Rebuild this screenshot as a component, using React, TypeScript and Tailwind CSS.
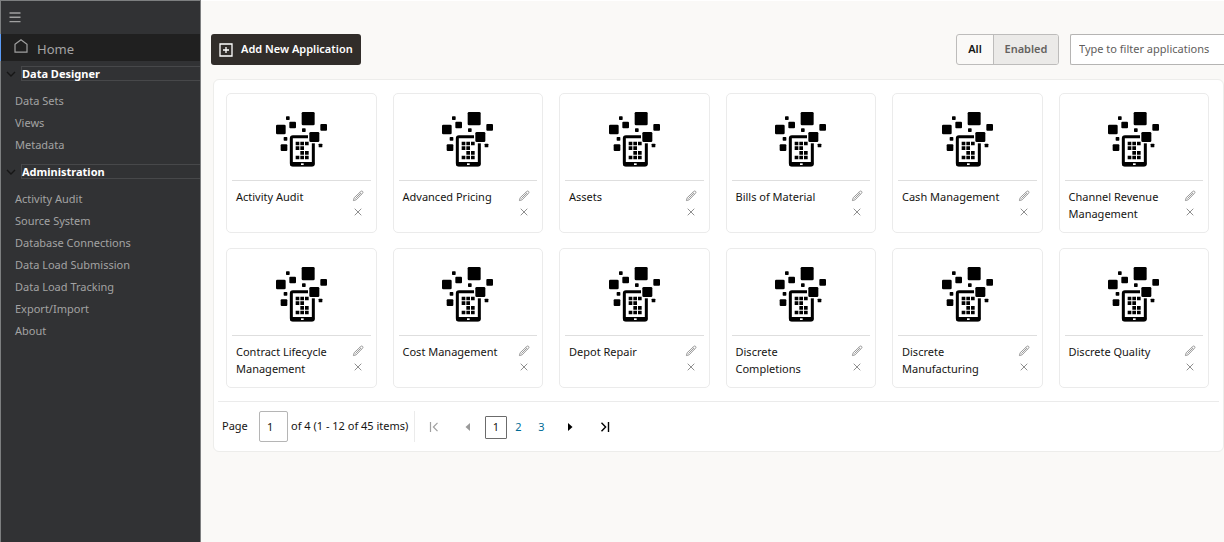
import React, { useState } from "react";

const designerLinks = ["Data Sets", "Views", "Metadata"];

const adminLinks = [
  "Activity Audit",
  "Source System",
  "Database Connections",
  "Data Load Submission",
  "Data Load Tracking",
  "Export/Import",
  "About",
];

const applications = [
  "Activity Audit",
  "Advanced Pricing",
  "Assets",
  "Bills of Material",
  "Cash Management",
  "Channel Revenue Management",
  "Contract Lifecycle Management",
  "Cost Management",
  "Depot Repair",
  "Discrete Completions",
  "Discrete Manufacturing",
  "Discrete Quality",
];

function AppIcon() {
  return (
    <svg viewBox="168 81 153 165" className="h-[55px] w-[51px]" aria-hidden="true">
      <rect x="214" y="155" width="66" height="85" rx="5" fill="#fff" stroke="#000" strokeWidth="9" />
      <rect x="211" y="231" width="72" height="13" rx="4" />
      <rect x="243" y="235" width="8" height="5" fill="#fff" />
      <rect x="264" y="136" width="38" height="39" fill="#fff" />
      <rect x="268" y="141" width="30" height="30" rx="4" />
      <rect x="245" y="81" width="39" height="40" rx="4" />
      <rect x="168" y="119" width="29" height="29" rx="4" />
      <rect x="208" y="110" width="20" height="20" rx="3" />
      <rect x="198" y="94" width="11" height="11" rx="2" />
      <rect x="246" y="130" width="11" height="11" rx="2" />
      <rect x="301" y="117" width="20" height="20" rx="3" />
      <rect x="191" y="156" width="11" height="11" rx="2" />
      <rect x="182" y="178" width="20" height="20" rx="3" />
      <rect x="296" y="176" width="11" height="11" rx="2" />
      <path d="M227 170h11v11h-11zM241 170h11v11h-11zM255 170h11v11h-11zM227 184h11v11h-11zM241 184h11v11h-11zM241 198h11v11h-11zM255 198h11v11h-11zM227 212h11v11h-11zM241 212h11v11h-11zM255 212h11v11h-11z" />
    </svg>
  );
}

function NavSection({ title, links }: { title: string; links: string[] }) {
  return (
    <section className="mt-[5px] mb-2">
      <h2 className="flex items-center">
        <svg viewBox="0 0 10 6" className="mx-[5px] h-[6px] w-[10px]" fill="none" stroke="#161616" strokeWidth="1.4" aria-hidden="true">
          <path d="M1 1l4 4 4-4" />
        </svg>
        <button type="button" className="h-[15px] flex-1 border border-r-0 border-[#47484a] text-left text-[11px] leading-[13px] font-bold text-white">
          {title}
        </button>
      </h2>
      <ul className="mt-[9px]">
        {links.map((link) => (
          <li key={link}>
            <a href="#" className="block pl-[14px] text-[11px] leading-[22px] text-[#a3a3a3]">
              {link}
            </a>
          </li>
        ))}
      </ul>
    </section>
  );
}

function Sidebar() {
  return (
    <nav className="w-[201px] shrink-0 border border-b-0 border-[#7d7f80] bg-[#313234]">
      <button type="button" aria-label="Toggle navigation" className="flex h-[33px] items-center pl-2">
        <svg viewBox="0 0 12 12" className="h-3 w-3" stroke="#a0a0a0" strokeWidth="1.4" aria-hidden="true">
          <path d="M0.5 1h11M0.5 5.3h11M0.5 9.6h11" />
        </svg>
      </button>
      <a href="#" className="-ml-px flex h-[27px] items-center gap-2 border-l border-[#5b9bf5] bg-[#202020] pl-3 text-[13px] text-[#a3a3a3]">
        <svg viewBox="0 0 16 16" className="mb-1 h-4 w-4" fill="none" stroke="#a0a0a0" strokeWidth="1.2" aria-hidden="true">
          <path d="M2 6.3L8 1.7l6 4.6v7.9H2z" />
        </svg>
        <span className="pt-1">Home</span>
      </a>
      <NavSection title="Data Designer" links={designerLinks} />
      <NavSection title="Administration" links={adminLinks} />
    </nav>
  );
}

function AppCard({ name }: { name: string }) {
  return (
    <li className="flex min-h-[140px] flex-col rounded-[5px] border border-[#ebebeb] px-[5px]">
      <div className="flex h-[87px] justify-center border-b border-[#dedede] pt-[18px]">
        <AppIcon />
      </div>
      <div className="flex justify-between pt-[7px] pr-[7px] pl-1">
        <h3 className="w-[104px] text-[11px] leading-[17px] text-[#161513]">{name}</h3>
        <div className="flex flex-col items-center gap-[6px] pt-[2px] text-[#8f8f8f]">
          <button type="button" aria-label={`Edit ${name}`}>
            <svg viewBox="0 0 12 12" className="h-3 w-3" fill="none" stroke="currentColor" strokeWidth="0.9" strokeLinejoin="round" aria-hidden="true">
              <path d="M1.4 10.6l0.8-2.9L8.9 1.4a1.2 1.2 0 0 1 1.7 1.7L4.2 9.8zM7.7 2.5l1.8 1.8M3.4 8.6l5-5" />
            </svg>
          </button>
          <button type="button" aria-label={`Remove ${name}`}>
            <svg viewBox="0 0 8 8" className="h-2 w-2" fill="none" stroke="currentColor" strokeWidth="1" aria-hidden="true">
              <path d="M0.7 0.7l6.6 6.6M7.3 0.7L0.7 7.3" />
            </svg>
          </button>
        </div>
      </div>
    </li>
  );
}

function Pager() {
  const [page, setPage] = useState("1");
  return (
    <div className="mx-1 flex h-[50px] items-center border-t border-[#ebebeb] pl-1 text-[11px] text-[#161513]">
      <label htmlFor="page" className="w-[37px]">Page</label>
      <input
        id="page"
        value={page}
        onChange={(e) => setPage(e.target.value)}
        className="h-[31px] w-[29px] rounded-[2px] border border-[#b5b5b5] bg-white pl-[7px] outline-none"
      />
      <span className="ml-[3px] w-[123px] whitespace-nowrap">of 4 (1 - 12 of 45 items)</span>
      <div className="h-[31px] border-l border-[#ebebeb]" />
      <div className="flex items-center pt-px">
        <button type="button" disabled aria-label="First page" className="flex w-[37px] justify-center">
          <svg viewBox="0 0 10 10" className="h-[10px] w-[10px]" fill="none" stroke="#a0a0a0" strokeWidth="1.2" aria-hidden="true">
            <path d="M1.5 0v10M8.5 0.8L4.4 5l4.1 4.2" />
          </svg>
        </button>
        <button type="button" disabled aria-label="Previous page" className="flex w-[33px] pl-[13px]">
          <svg viewBox="0 0 5 8" className="h-2 w-[5px]" fill="#9a9a9a" aria-hidden="true">
            <path d="M5 0v8L0.5 4z" />
          </svg>
        </button>
        <button type="button" aria-current="page" className="h-[23px] w-[22px] rounded-[1px] border border-[#6b6b6b]">1</button>
        <button type="button" className="w-[23px] text-[#006b96]">2</button>
        <button type="button" className="w-[23px] text-[#006b96]">3</button>
        <button type="button" aria-label="Next page" className="flex w-[35px] justify-center">
          <svg viewBox="0 0 5 8" className="h-2 w-[5px]" aria-hidden="true">
            <path d="M0 0v8l4.5-4z" />
          </svg>
        </button>
        <button type="button" aria-label="Last page" className="flex w-[34px] justify-center">
          <svg viewBox="0 0 10 10" className="h-[10px] w-[10px]" fill="none" stroke="#000" strokeWidth="1.4" aria-hidden="true">
            <path d="M8.5 0v10M1.5 0.8L5.6 5 1.5 9.2" />
          </svg>
        </button>
      </div>
    </div>
  );
}

export default function App() {
  const [enabledOnly, setEnabledOnly] = useState(false);
  const [filter, setFilter] = useState("");
  return (
    <div className="flex min-h-screen bg-[#faf9f7] font-['Noto_Sans',sans-serif]">
      <Sidebar />
      <main className="min-w-0 flex-1 border-t border-white pt-[33px]">
        <header className="flex h-[31px] items-stretch pl-[10px]">
          <button type="button" className="flex items-center gap-2 rounded-[3px] bg-[#312d2a] px-2 text-[11px] font-semibold text-white">
            <svg viewBox="0 0 14 14" className="h-[14px] w-[14px]" fill="none" stroke="#fff" strokeWidth="1.3" aria-hidden="true">
              <path d="M1 1h12v12H1zM7 4v6M4 7h6" />
            </svg>
            Add New Application
          </button>
          <div role="group" aria-label="Show" className="ml-auto flex overflow-hidden rounded-[3px] border border-[#bdbcbb] text-[11px] font-semibold">
            <button type="button" aria-pressed={!enabledOnly} onClick={() => setEnabledOnly(false)} className="w-[36px] text-[#161513]">
              All
            </button>
            <button type="button" aria-pressed={enabledOnly} onClick={() => setEnabledOnly(true)} className="w-[65px] border-l border-[#bdbcbb] bg-[#ebeae8] text-[#65625f]">
              Enabled
            </button>
          </div>
          <input
            type="text"
            aria-label="Filter applications"
            placeholder="Type to filter applications"
            value={filter}
            onChange={(e) => setFilter(e.target.value)}
            className="ml-[11px] w-[154px] rounded-l-[2px] border border-r-0 border-[#b5b4b3] bg-white pl-2 text-[11px] text-[#161513] outline-none placeholder:text-[#5f5d5b]"
          />
        </header>
        <section aria-label="Applications" className="mt-[14px] ml-3 rounded-md border border-[#ededeb] bg-white">
          <ul className="grid grid-cols-6 gap-x-4 gap-y-[15px] py-[13px] pr-[14px] pl-3">
            {applications.map((name) => (
              <AppCard key={name} name={name} />
            ))}
          </ul>
          <Pager />
        </section>
      </main>
    </div>
  );
}
